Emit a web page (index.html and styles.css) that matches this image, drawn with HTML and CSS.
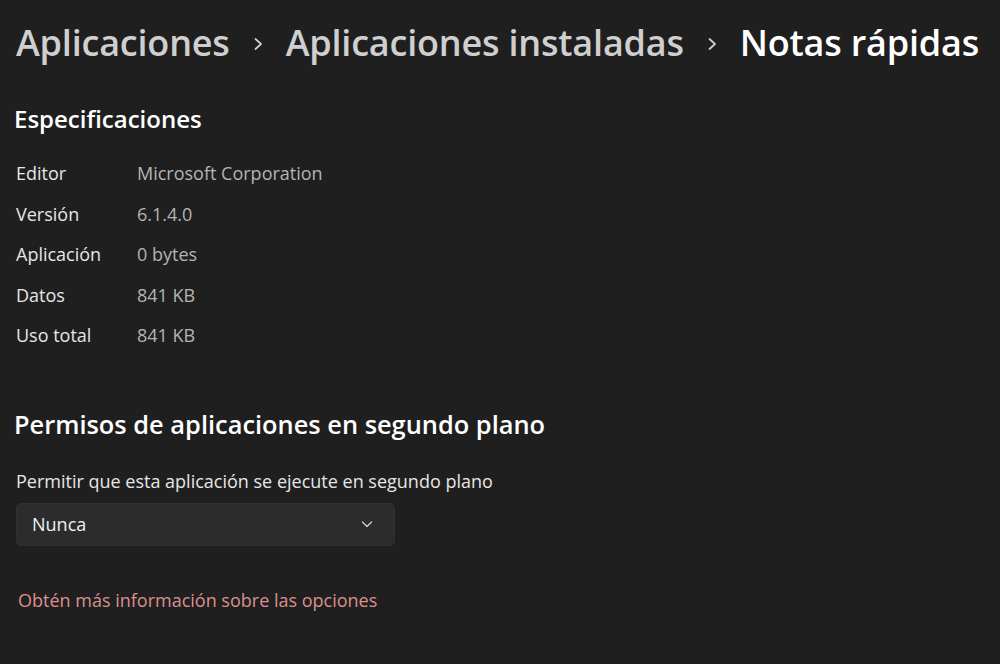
FILE: index.html
```html
<!DOCTYPE html>
<html lang="es">
<head>
    <meta charset="UTF-8">
    <meta name="viewport" content="width=device-width, initial-scale=1.0">
    <title>Notas rápidas</title>
    <link rel="stylesheet" href="styles.css">
</head>
<body>
    <div class="page">
        <h1 class="breadcrumb">
            <span class="crumb">Aplicaciones</span>
            <svg class="sep" viewBox="0 0 14 14" width="14" height="14"><path d="M4.5 2 L10 7 L4.5 12" fill="none" stroke="currentColor" stroke-width="1.7" stroke-linecap="round" stroke-linejoin="round"/></svg>
            <span class="crumb">Aplicaciones instaladas</span>
            <svg class="sep" viewBox="0 0 14 14" width="14" height="14"><path d="M4.5 2 L10 7 L4.5 12" fill="none" stroke="currentColor" stroke-width="1.7" stroke-linecap="round" stroke-linejoin="round"/></svg>
            <span class="crumb current">Notas rápidas</span>
        </h1>

        <h2 class="section-title">Especificaciones</h2>
        <div class="specs">
            <div class="spec-row"><span class="spec-label">Editor</span><span class="spec-value">Microsoft Corporation</span></div>
            <div class="spec-row"><span class="spec-label">Versión</span><span class="spec-value">6.1.4.0</span></div>
            <div class="spec-row"><span class="spec-label">Aplicación</span><span class="spec-value">0 bytes</span></div>
            <div class="spec-row"><span class="spec-label">Datos</span><span class="spec-value">841 KB</span></div>
            <div class="spec-row"><span class="spec-label">Uso total</span><span class="spec-value">841 KB</span></div>
        </div>

        <h2 class="section-title permisos">Permisos de aplicaciones en segundo plano</h2>
        <p class="field-label">Permitir que esta aplicación se ejecute en segundo plano</p>
        <div class="dropdown">
            <span>Nunca</span>
            <svg class="chevron" viewBox="0 0 12 12" width="12" height="12"><path d="M1.5 4 L6 8.5 L10.5 4" fill="none" stroke="currentColor" stroke-width="1.3" stroke-linecap="round" stroke-linejoin="round"/></svg>
        </div>

        <a class="more-link" href="#">Obtén más información sobre las opciones</a>
    </div>
</body>
</html>
```

FILE: styles.css
```css
body {
    margin: 0;
    background-color: #1f1f1f;
    font-family: "Open Sans", "Noto Sans", sans-serif;
    color: #e6e6e6;
    height: 664px;
    overflow: hidden;
}

.page {
    padding: 18px 16px 0 16px;
}

.breadcrumb {
    display: flex;
    align-items: center;
    gap: 21px;
    margin: 0;
    font-size: 36px;
    font-weight: 600;
    line-height: 50px;
    letter-spacing: -0.2px;
    color: #cfcfcf;
    white-space: nowrap;
}

.breadcrumb .current {
    color: #ffffff;
}

.breadcrumb .sep {
    flex-shrink: 0;
    color: #cfcfcf;
    margin-top: 2px;
}

.section-title {
    margin: 0;
    font-size: 25.4px;
    font-weight: 600;
    line-height: 34px;
    color: #ffffff;
    white-space: nowrap;
}

.breadcrumb + .section-title {
    margin-top: 34px;
    margin-left: -2px;
    font-size: 24px;
}

.specs {
    margin-top: 17px;
}

.spec-row {
    display: flex;
    height: 40.5px;
    align-items: center;
    font-size: 18px;
}

.spec-label {
    width: 121px;
    color: #e6e6e6;
}

.spec-value {
    color: #b4b4b4;
}

.section-title.permisos {
    margin-top: 51px;
    margin-left: -2px;
}

.field-label {
    margin: 28px 0 0 0;
    font-size: 18px;
    line-height: 24px;
    color: #e6e6e6;
    white-space: nowrap;
}

.dropdown {
    display: flex;
    align-items: center;
    justify-content: space-between;
    box-sizing: border-box;
    width: 379px;
    height: 43px;
    margin-top: 10px;
    padding: 0 21px 0 15px;
    border-radius: 5px;
    background-color: #2c2c2c;
    border: 1px solid #303030;
    font-size: 18px;
    color: #f0f0f0;
}

.dropdown .chevron {
    color: #cfcfcf;
}

.more-link {
    display: block;
    margin-top: 42px;
    margin-left: 2px;
    font-size: 18px;
    color: #dc8f8e;
    text-decoration: none;
    white-space: nowrap;
}
```
